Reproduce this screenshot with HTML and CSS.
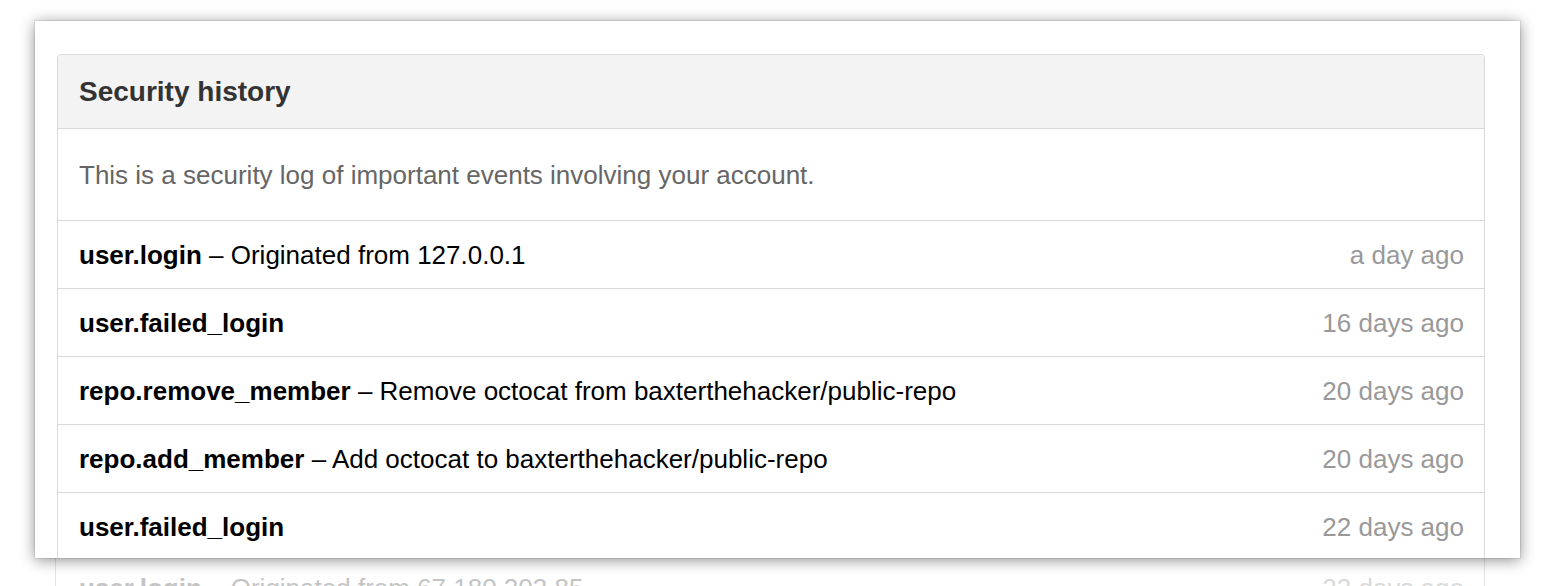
FILE: index.html
```html
<!DOCTYPE html>
<html lang="en">
<head>
<meta charset="utf-8">
<title>Security history</title>
<link rel="stylesheet" href="styles.css">
</head>
<body>
<div class="stage">
  <div class="card">
    <div class="panel">
      <div class="panel-head"><h3 class="panel-title">Security history</h3></div>
      <p class="panel-intro">This is a security log of important events involving your account.</p>
      <ul class="log">
        <li class="log-row"><span class="log-text"><b class="log-key">user.login</b> – Originated from 127.0.0.1</span><span class="log-time">a day ago</span></li>
        <li class="log-row"><span class="log-text"><b class="log-key">user.failed_login</b></span><span class="log-time">16 days ago</span></li>
        <li class="log-row"><span class="log-text"><b class="log-key">repo.remove_member</b> – Remove octocat from baxterthehacker/public-repo</span><span class="log-time">20 days ago</span></li>
        <li class="log-row"><span class="log-text"><b class="log-key">repo.add_member</b> – Add octocat to baxterthehacker/public-repo</span><span class="log-time">20 days ago</span></li>
        <li class="log-row"><span class="log-text"><b class="log-key">user.failed_login</b></span><span class="log-time">22 days ago</span></li>
      </ul>
    </div>
  </div>
  <div class="beneath">
    <div class="log-row faded"><span class="log-text"><b class="log-key">user.login</b> – Originated from 67.180.203.85</span><span class="log-time">22 days ago</span></div>
  </div>
</div>
</body>
</html>
```
FILE: styles.css
```css
html, body {
  margin: 0;
  padding: 0;
  background: #ffffff;
  overflow: hidden;
  height: 586px;
}
body {
  font-family: "Liberation Sans", Arial, Helvetica, sans-serif;
  color: #000;
}
.stage {
  padding: 21px 0 0 35px;
}
.card {
  position: relative;
  z-index: 2;
  width: 1485px;
  height: 537px;
  box-sizing: border-box;
  background: #fff;
  padding: 33px 35px 0 22px;
  overflow: hidden;
  box-shadow: 0 0 0 1px rgba(0,0,0,0.08), 0 2px 14px rgba(0,0,0,0.45);
}
.panel {
  border: 1px solid #d9d9d9;
  border-radius: 4px 4px 0 0;
  background: #fff;
}
.panel-head {
  background: #f3f3f3;
  border-bottom: 1px solid #d9d9d9;
  border-radius: 4px 4px 0 0;
  padding: 0 21px;
  height: 73px;
}
.panel-title {
  margin: 0;
  font-size: 28px;
  line-height: 73px;
  font-weight: bold;
  color: #333;
}
.panel-intro {
  margin: 0;
  padding: 0 21px;
  height: 91px;
  line-height: 92px;
  font-size: 26px;
  color: #666;
  border-bottom: 1px solid #d9d9d9;
}
.log {
  list-style: none;
  margin: 0;
  padding: 0;
}
.log-row {
  display: flex;
  justify-content: space-between;
  align-items: center;
  height: 67px;
  line-height: 68px;
  padding: 0 20px 0 21px;
  font-size: 26px;
  border-bottom: 1px solid #d9d9d9;
  white-space: nowrap;
}
.log-key {
  font-weight: bold;
  color: #000;
}
.log-text {
  color: #000;
}
.log-time {
  color: #999;
}
.beneath {
  margin: -4px 0 0 20px;
  width: 1430px;
  box-sizing: border-box;
  border-left: 1px solid #e4e4e4;
  border-right: 1px solid #e4e4e4;
  height: 40px;
  overflow: hidden;
}
.faded {
  border-bottom: none;
  padding-left: 23px;
}
.faded .log-text, .faded .log-key {
  color: #c4c4c4;
}
.faded .log-time {
  color: #dadada;
}
```
